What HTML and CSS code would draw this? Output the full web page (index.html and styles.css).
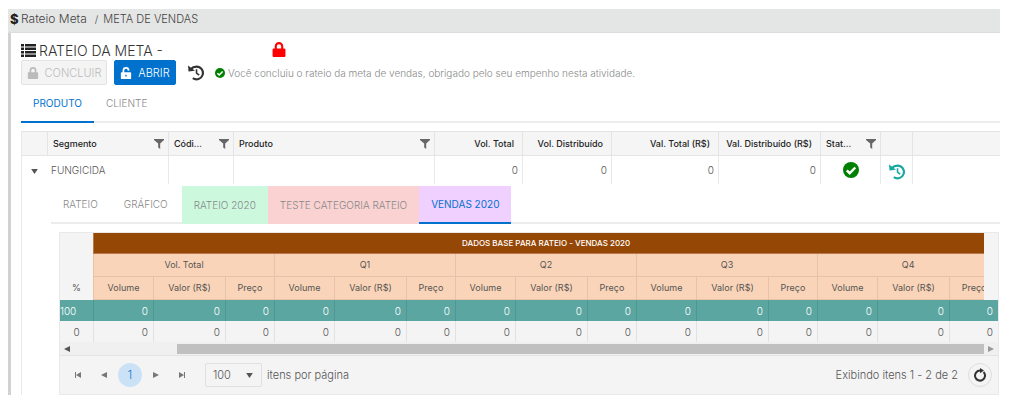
FILE: index.html
```html
<!DOCTYPE html>
<html lang="pt-BR">
<head>
<meta charset="utf-8">
<meta name="viewport" content="width=device-width, initial-scale=1">
<title>Rateio Meta</title>
<link rel="stylesheet" href="styles.css">
</head>
<body>
<svg class="sprite" aria-hidden="true">
  <symbol id="lock" viewBox="0 0 14 14"><path fill-rule="evenodd" d="M3 6V4a4 4 0 0 1 8 0v2h1a1 1 0 0 1 1 1v6a1 1 0 0 1-1 1H2a1 1 0 0 1-1-1V7a1 1 0 0 1 1-1zm2 0h4V4a2 2 0 0 0-4 0z"/></symbol>
  <symbol id="unlock" viewBox="0 0 14 14"><path fill-rule="evenodd" d="M3 6V4a4 4 0 0 1 8 0v.5H9V4a2 2 0 0 0-4 0v2h7a1 1 0 0 1 1 1v6a1 1 0 0 1-1 1H2a1 1 0 0 1-1-1V7a1 1 0 0 1 1-1zm3.200 3v2.200h1.600V9z"/></symbol>
  <symbol id="history" viewBox="0 1 15 14"><path fill="none" stroke="currentColor" stroke-width="2" d="M2.500 4.500C4 2.800 6 2 8 2a6 6 0 1 1-3.500 10.900"/><path d="M0 1l.5 5.700L6.500 6z"/><path fill="none" stroke="currentColor" stroke-width="1.500" d="M8 4.500V8l2.500 2"/></symbol>
  <symbol id="check" viewBox="0 0 16 16"><circle cx="8" cy="8" r="8"/><path fill="none" stroke="#fff" stroke-width="2.400" d="M3.800 8.300l2.900 2.900 5.600-5.700"/></symbol>
  <symbol id="list" viewBox="0 0 15 13"><path d="M0 0h3v2.500H0zm4 0h11v2.500H4zM0 3.500h3V6H0zm4 0h11V6H4zM0 7h3v2.500H0zm4 0h11v2.500H4zM0 10.500h3V13H0zm4 0h11V13H4z"/></symbol>
  <symbol id="filter" viewBox="0 0 10 10"><path d="M0 0h10v1L6.200 4.500V10L4.200 8.500v-4L0 1z"/></symbol>
  <symbol id="left" viewBox="0 0 8 8"><path d="M7 1v6L1 4z"/></symbol>
  <symbol id="right" viewBox="0 0 8 8"><path d="M1 1v6l6-3z"/></symbol>
  <symbol id="first" viewBox="0 0 8 8"><path d="M1 1h1v6H1zm6 0v6L2 4z"/></symbol>
  <symbol id="last" viewBox="0 0 8 8"><path d="M6 1h1v6H6zM1 1v6l5-3z"/></symbol>
  <symbol id="down" viewBox="0 0 8 6"><path d="M0 0h8L4 6z"/></symbol>
  <symbol id="reload" viewBox="0 0 14 14"><path fill="none" stroke="currentColor" stroke-width="2" d="M10.500 4A5 5 0 1 1 7 2.600"/><path d="M7 0l4 2.500L7 5.200z"/></symbol>
</svg>

<div class="page">
  <nav class="crumbs" aria-label="Navegação"><b class="dollar">$</b><a href="#">Rateio Meta</a><span class="slash">/</span><span class="here">META DE VENDAS</span></nav>

  <main class="card">
    <header class="title">
      <svg class="i-list"><use href="#list"/></svg>
      <h1>RATEIO DA META -</h1>
      <svg class="i-lock"><use href="#lock"/></svg>
    </header>

    <div class="toolbar">
      <button class="btn" disabled><svg class="i12"><use href="#lock"/></svg>CONCLUIR</button>
      <button class="btn primary"><svg class="i12"><use href="#unlock"/></svg>ABRIR</button>
      <button class="icon-btn" aria-label="Histórico"><svg class="i16"><use href="#history"/></svg></button>
      <p class="message"><svg class="i10 green"><use href="#check"/></svg>Você concluiu o rateio da meta de vendas, obrigado pelo seu empenho nesta atividade.</p>
    </div>

    <div class="tabs" role="tablist">
      <button class="tab active" role="tab" aria-selected="true">PRODUTO</button>
      <button class="tab" role="tab">CLIENTE</button>
    </div>

    <section class="grid">
      <table class="outer">
        <colgroup><col class="w25"><col class="w121"><col class="w65"><col class="w201"><col class="w88"><col class="w89"><col class="w107"><col class="w102"><col class="w60"><col class="w32"><col></colgroup>
        <thead>
          <tr>
            <th></th>
            <th><div class="head">Segmento<button class="filter" aria-label="Filtrar Segmento"><svg class="i10"><use href="#filter"/></svg></button></div></th>
            <th><div class="head">Códi…<button class="filter" aria-label="Filtrar Código"><svg class="i10"><use href="#filter"/></svg></button></div></th>
            <th><div class="head">Produto<button class="filter" aria-label="Filtrar Produto"><svg class="i10"><use href="#filter"/></svg></button></div></th>
            <th class="num">Vol. Total</th>
            <th class="num">Vol. Distribuído</th>
            <th class="num">Val. Total (R$)</th>
            <th class="num">Val. Distribuído (R$)</th>
            <th><div class="head">Stat…<button class="filter" aria-label="Filtrar Status"><svg class="i10"><use href="#filter"/></svg></button></div></th>
            <th></th>
            <th></th>
          </tr>
        </thead>
        <tbody>
          <tr>
            <td class="center"><button class="icon-btn" aria-label="Recolher"><svg class="i-caret"><use href="#down"/></svg></button></td>
            <td>FUNGICIDA</td>
            <td></td>
            <td></td>
            <td class="num">0</td>
            <td class="num">0</td>
            <td class="num">0</td>
            <td class="num">0</td>
            <td class="center"><svg class="i16 green"><use href="#check"/></svg></td>
            <td class="center"><button class="icon-btn teal" aria-label="Histórico do segmento"><svg class="i16"><use href="#history"/></svg></button></td>
            <td></td>
          </tr>
        </tbody>
      </table>

      <div class="detail">
        <div class="tabs" role="tablist">
          <button class="tab plain" role="tab">RATEIO</button>
          <button class="tab plain" role="tab">GRÁFICO</button>
          <button class="tab mint" role="tab">RATEIO 2020</button>
          <button class="tab rose" role="tab">TESTE CATEGORIA RATEIO</button>
          <button class="tab lilac active" role="tab" aria-selected="true">VENDAS 2020</button>
        </div>

        <div class="data">
          <div class="data-head">
            <table class="inner">
              <colgroup><col class="w33"><col class="w60"><col class="w72"><col class="w49"><col class="w60"><col class="w72"><col class="w49"><col class="w60"><col class="w72"><col class="w49"><col class="w60"><col class="w72"><col class="w49"><col class="w60"><col class="w72"><col class="w49"></colgroup>
              <thead>
                <tr><th rowspan="3" class="percent">%</th><th colspan="15" class="brown">DADOS BASE PARA RATEIO - VENDAS 2020</th></tr>
                <tr><th colspan="3">Vol. Total</th><th colspan="3">Q1</th><th colspan="3">Q2</th><th colspan="3">Q3</th><th colspan="3">Q4</th></tr>
                <tr><th>Volume</th><th>Valor (R$)</th><th>Preço</th><th>Volume</th><th>Valor (R$)</th><th>Preço</th><th>Volume</th><th>Valor (R$)</th><th>Preço</th><th>Volume</th><th>Valor (R$)</th><th>Preço</th><th>Volume</th><th>Valor (R$)</th><th>Preço</th></tr>
              </thead>
            </table>
          </div>
          <table class="inner">
            <colgroup><col class="w33"><col class="w60"><col class="w72"><col class="w49"><col class="w60"><col class="w72"><col class="w49"><col class="w60"><col class="w72"><col class="w49"><col class="w60"><col class="w72"><col class="w49"><col class="w60"><col class="w72"><col class="w49"></colgroup>
            <tbody>
              <tr class="selected"><td>100</td><td>0</td><td>0</td><td>0</td><td>0</td><td>0</td><td>0</td><td>0</td><td>0</td><td>0</td><td>0</td><td>0</td><td>0</td><td>0</td><td>0</td><td>0</td></tr>
              <tr><td>0</td><td>0</td><td>0</td><td>0</td><td>0</td><td>0</td><td>0</td><td>0</td><td>0</td><td>0</td><td>0</td><td>0</td><td>0</td><td>0</td><td>0</td><td>0</td></tr>
            </tbody>
          </table>
          <div class="scroll">
            <svg class="i8"><use href="#left"/></svg>
            <div class="track"><div class="thumb"></div></div>
            <svg class="i8 faded"><use href="#right"/></svg>
          </div>
          <footer class="pager">
            <div class="pages">
              <button class="page-btn" aria-label="Primeira página"><svg class="i8"><use href="#first"/></svg></button>
              <button class="page-btn" aria-label="Página anterior"><svg class="i8"><use href="#left"/></svg></button>
              <button class="page-btn current">1</button>
              <button class="page-btn" aria-label="Próxima página"><svg class="i8"><use href="#right"/></svg></button>
              <button class="page-btn" aria-label="Última página"><svg class="i8"><use href="#last"/></svg></button>
            </div>
            <div class="select-box">
              <select id="size"><option>100</option><option>50</option></select>
              <svg class="i-caret"><use href="#down"/></svg>
            </div>
            <label for="size">itens por página</label>
            <span class="info">Exibindo itens 1 - 2 de 2</span>
            <button class="reload" aria-label="Atualizar"><svg class="i14"><use href="#reload"/></svg></button>
          </footer>
        </div>
      </div>
    </section>
  </main>
</div>
</body>
</html>
```

FILE: styles.css
```css
* { box-sizing: border-box; }
body {
  margin: 0;
  background: #fff;
  color: #555;
  font: 300 10px/14px Inter, "Open Sans", sans-serif;
}
button, select { font: inherit; color: inherit; margin: 0; padding: 0; border: 0; background: none; }
svg { display: block; flex: none; fill: currentColor; }
.sprite { position: absolute; width: 0; height: 0; }
.page { padding: 9px 10px 11px 8px; }

.crumbs {
  display: flex;
  align-items: center;
  height: 24px;
  padding: 0 2px 3px;
  background: #e4e6e5;
  border-bottom: 1px solid #dcdedd;
  font-size: 12px;
  color: #444;
}
.crumbs a { color: inherit; text-decoration: none; }
.here { font-size: 11px; }
.dollar { width: 11px; font-size: 13px; font-weight: 800; color: #222; }
.slash { margin: 0 5px 0 8px; font-size: 10px; }

.card { border-left: 3px solid #d2d2d2; padding: 8px 0 0 10px; }
.title { display: flex; align-items: center; height: 19px; }
.title h1 { flex: 0 0 232px; margin: 0; padding-left: 3px; font-size: 14px; font-weight: 300; color: #333; }
.i-list { width: 15px; height: 13px; color: #222; }
.i-lock { width: 16px; height: 15px; margin: 0 0 3px 3px; color: #f00; }

.toolbar { display: flex; align-items: center; }
.btn {
  display: flex;
  align-items: center;
  justify-content: center;
  gap: 6px;
  width: 86px;
  height: 25px;
  border: 1px solid #e3e3e3;
  border-radius: 2px;
  background: #f4f4f4;
  color: #bbb;
  font-size: 11px;
}
.btn.primary { width: 62px; margin: 0 12px 0 7px; border-color: #0072ce; background: #0072ce; color: #fff; }
.icon-btn { display: inline-block; vertical-align: middle; color: #333; }
.icon-btn.teal { color: #14a8a0; padding-top: 4px; }
.message { display: flex; align-items: center; gap: 3px; margin: 0 0 0 11px; color: #8a8a8a; }
.green { color: #008000; }
.i8 { width: 8px; height: 8px; }
.i10 { width: 10px; height: 10px; }
.i12 { width: 12px; height: 12px; }
.i14 { width: 14px; height: 14px; }
.i16 { width: 16px; height: 16px; }
.i-caret { width: 7px; height: 5px; color: #555; }

.tabs { display: flex; height: 38px; border-bottom: 2px solid #ececec; }
.tab { height: 38px; padding: 0 12px; border-bottom: 2px solid transparent; color: #888; }
.tab.active { color: #0072ce; border-bottom-color: #0072ce; font-weight: 400; }
.plain { margin-right: 2px; }
.mint { background: #ccf9de; }
.rose { background: #fad2d2; }
.lilac { background: #f0d0ff; }
.mint, .rose { border-bottom: 0; }

.grid { margin-top: 8px; border-left: 1px solid #e8e8e8; }
table { width: 100%; border-collapse: separate; border-spacing: 0; table-layout: fixed; }
th, td { padding: 0; white-space: nowrap; overflow: hidden; }
.outer th { height: 25px; padding: 0 4px 0 5px; background: #f5f5f5; border: solid #e4e4e4; border-width: 1px 0 1px 1px; color: #222; font-size: 9px; font-weight: 500; text-align: left; }
.outer td { height: 28px; padding: 0 4px; border-left: 1px solid #e8e8e8; }
.outer th:first-child, .outer td:first-child, .outer td:nth-child(2) { border-left: 0; }
.outer .num { text-align: right; }
.outer th.num { padding-right: 8px; }
.outer .center { padding: 0; text-align: center; }
.outer .center svg { margin: 0 auto; }
.head { display: flex; justify-content: space-between; align-items: center; }
.filter { color: #666; }
.w25 { width: 25px; } .w121 { width: 121px; } .w65 { width: 65px; } .w201 { width: 201px; }
.w88 { width: 88px; } .w89 { width: 89px; } .w107 { width: 107px; } .w102 { width: 102px; }
.w60 { width: 60px; } .w32 { width: 32px; } .w33 { width: 33px; } .w72 { width: 72px; } .w49 { width: 49px; }

.detail { padding: 2px 0 0 29px; }
.data { margin: 8px 1px 0 8px; border: 1px solid #e9e9e9; background: #f4f4f4; }
.data-head { overflow: hidden; margin-right: 14px; }
.data-head .inner { width: calc(100% + 14px); }
.inner th { height: 23px; font-size: 9px; font-weight: 400; background: #fad4b8; border: solid #e6c2a8; border-width: 0 0 1px 1px; }
.inner th.percent { padding-bottom: 5px; background: #f4f4f4; border: 0; vertical-align: bottom; }
.inner th.brown { height: 21px; background: #954706; color: #fff; border-color: #b87a4c; font-size: 8px; font-weight: 500; }
.inner td { height: 21px; padding: 0 5px; border-left: 1px solid #e2e2e2; font-size: 10px; text-align: right; }
.inner td:first-child { padding: 0 17px 0 0; border-left: 0; }
.inner .selected td { background: #5ba6a1; border-left-color: #519690; color: #fff; }
.inner td:first-child { padding: 0; text-align: center; }
.inner .selected td:first-child { text-align: left; }

.scroll { display: flex; align-items: center; justify-content: space-between; height: 14px; padding: 0 3px; background: #f0f0f0; border-bottom: 1px solid #e3e3e3; }
.track { flex: 1; padding: 0 3px 0 106px; }
.thumb { height: 10px; background: #c0c0c0; }
.faded { color: #999; }

.pager { display: flex; align-items: center; height: 38px; padding: 0 6px; font-size: 11px; }
.pages { display: flex; gap: 2px; }
.page-btn { display: flex; align-items: center; justify-content: center; width: 24px; height: 24px; border-radius: 50%; color: #777; }
.page-btn.current { background: #cbe2f6; color: #0072ce; }
.select-box { position: relative; width: 57px; margin: 0 5px 0 11px; }
.select-box select { width: 100%; height: 24px; padding-left: 7px; appearance: none; border: 1px solid #e0e0e0; border-radius: 2px; }
.select-box svg { position: absolute; right: 9px; top: 10px; pointer-events: none; }
.info { margin-left: auto; }
.reload { display: flex; align-items: center; justify-content: center; width: 24px; height: 24px; margin-left: 10px; border: 1px solid #ddd; border-radius: 50%; color: #333; }
```
